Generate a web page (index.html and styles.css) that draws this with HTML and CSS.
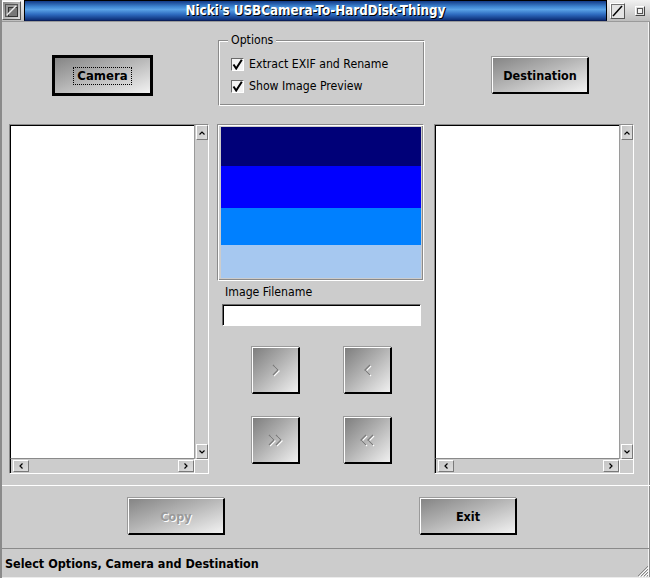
FILE: index.html
```html
<!DOCTYPE html>
<html>
<head>
<meta charset="utf-8">
<link rel="stylesheet" href="styles.css">
</head>
<body>
<div class="window">
  <div class="titlebar">
    <div class="gadget-left">
      <div class="gl-box">
        <svg width="15" height="15" viewBox="0 0 15 15"><rect x="1.5" y="1.5" width="12" height="12" fill="#9a9a9a" stroke="#555"/><rect x="4.5" y="4.5" width="9" height="9" fill="#777" stroke="#333"/><path d="M3 12 L12 3" stroke="#eee" stroke-width="1.5"/></svg>
      </div>
    </div>
    <div class="title"><span>Nicki's USBCamera-To-HardDisk-Thingy</span></div>
    <div class="gadgets-right">
      <div class="g-zoom"><svg width="13" height="14" viewBox="0 0 13 14"><path d="M2 12 L11 2" stroke="#000" stroke-width="1.5"/></svg></div>
      <div class="g-depth"><div class="g-depth-in"></div></div>
    </div>
  </div>

  <div class="main">
    <div class="top-left">
      <div class="btn btn-default camera"><span class="focus">Camera</span></div>
    </div>
    <div class="options">
      <span class="legend">Options</span>
      <div class="check"><span class="box"><svg width="11" height="11" viewBox="0 0 11 11"><path d="M1.5 5.5 L4.2 9.5 L9.8 0.8" fill="none" stroke="#000" stroke-width="2"/></svg></span>Extract EXIF and Rename</div>
      <div class="check"><span class="box"><svg width="11" height="11" viewBox="0 0 11 11"><path d="M1.5 5.5 L4.2 9.5 L9.8 0.8" fill="none" stroke="#000" stroke-width="2"/></svg></span>Show Image Preview</div>
    </div>
    <div class="top-right">
      <div class="btn dest">Destination</div>
    </div>

    <div class="list">
      <div class="list-body"></div>
      <div class="vscroll">
        <div class="sbtn v"><svg width="6" height="4" viewBox="0 0 6 4"><path d="M0.5 3.5 L3 1 L5.5 3.5" fill="none" stroke="#000" stroke-width="1.2"/></svg></div>
        <div class="track"></div>
        <div class="sbtn v"><svg width="6" height="4" viewBox="0 0 6 4"><path d="M0.5 0.5 L3 3 L5.5 0.5" fill="none" stroke="#000" stroke-width="1.2"/></svg></div>
      </div>
      <div class="hscroll">
        <div class="sbtn h"><svg width="4" height="6" viewBox="0 0 4 6"><path d="M3.5 0.5 L1 3 L3.5 5.5" fill="none" stroke="#000" stroke-width="1.2"/></svg></div>
        <div class="track"></div>
        <div class="sbtn h"><svg width="4" height="6" viewBox="0 0 4 6"><path d="M0.5 0.5 L3 3 L0.5 5.5" fill="none" stroke="#000" stroke-width="1.2"/></svg></div>
      </div>
      <div class="corner"></div>
    </div>

    <div class="middle">
      <div class="preview">
        <div class="stripe s1"></div>
        <div class="stripe s2"></div>
        <div class="stripe s3"></div>
        <div class="stripe s4"></div>
      </div>
      <div class="fname-label">Image Filename</div>
      <div class="fname-field"></div>
      <div class="arrows">
        <div class="abtn"><svg width="10" height="13" viewBox="0 0 10 13"><path d="M3 2 L8 7 L3 12" fill="none" stroke="#fff" stroke-width="1.3"/><path d="M2 1 L7 6 L2 11" fill="none" stroke="#7c7c7c" stroke-width="1.3"/></svg></div>
        <div class="abtn"><svg width="10" height="13" viewBox="0 0 10 13"><path d="M8 2 L3 7 L8 12" fill="none" stroke="#fff" stroke-width="1.3"/><path d="M7 1 L2 6 L7 11" fill="none" stroke="#7c7c7c" stroke-width="1.3"/></svg></div>
        <div class="abtn"><svg width="17" height="13" viewBox="0 0 17 13"><path d="M3 2 L8 7 L3 12 M10 2 L15 7 L10 12" fill="none" stroke="#fff" stroke-width="1.3"/><path d="M2 1 L7 6 L2 11 M9 1 L14 6 L9 11" fill="none" stroke="#7c7c7c" stroke-width="1.3"/></svg></div>
        <div class="abtn"><svg width="17" height="13" viewBox="0 0 17 13"><path d="M8 2 L3 7 L8 12 M15 2 L10 7 L15 12" fill="none" stroke="#fff" stroke-width="1.3"/><path d="M7 1 L2 6 L7 11 M14 1 L9 6 L14 11" fill="none" stroke="#7c7c7c" stroke-width="1.3"/></svg></div>
      </div>
    </div>

    <div class="list right">
      <div class="list-body"></div>
      <div class="vscroll">
        <div class="sbtn v"><svg width="6" height="4" viewBox="0 0 6 4"><path d="M0.5 3.5 L3 1 L5.5 3.5" fill="none" stroke="#000" stroke-width="1.2"/></svg></div>
        <div class="track"></div>
        <div class="sbtn v"><svg width="6" height="4" viewBox="0 0 6 4"><path d="M0.5 0.5 L3 3 L5.5 0.5" fill="none" stroke="#000" stroke-width="1.2"/></svg></div>
      </div>
      <div class="hscroll">
        <div class="sbtn h"><svg width="4" height="6" viewBox="0 0 4 6"><path d="M3.5 0.5 L1 3 L3.5 5.5" fill="none" stroke="#000" stroke-width="1.2"/></svg></div>
        <div class="track"></div>
        <div class="sbtn h"><svg width="4" height="6" viewBox="0 0 4 6"><path d="M0.5 0.5 L3 3 L0.5 5.5" fill="none" stroke="#000" stroke-width="1.2"/></svg></div>
      </div>
      <div class="corner"></div>
    </div>
  </div>

  <div class="actions">
    <div class="btn copy disabled">Copy</div>
    <div class="btn exit">Exit</div>
  </div>

  <div class="status">
    <span class="status-text">Select Options, Camera and Destination</span>
    <svg class="grip" width="12" height="12" viewBox="0 0 12 12"><path d="M11 1 L1 11 M11 4 L4 11 M11 7 L7 11 M11 10 L10 11" stroke="#888" stroke-width="1"/><path d="M12 2 L2 12 M12 5 L5 12 M12 8 L8 12" stroke="#fff" stroke-width="1"/></svg>
  </div>
</div>
</body>
</html>
```

FILE: styles.css
```css
* { box-sizing: border-box; margin: 0; padding: 0; }

body {
  width: 650px;
  height: 578px;
  overflow: hidden;
  background: #cccccc;
  font-family: "DejaVu Sans Condensed", "DejaVu Sans", sans-serif;
  color: #000;
}

.window {
  width: 650px;
  height: 578px;
  display: flex;
  flex-direction: column;
  border-left: 2px solid #8a8a8a;
  box-shadow: inset -1px 0 0 #8a8a8a, inset -2px 0 0 #f4f4f4;
}

/* ---------- title bar ---------- */
.titlebar {
  height: 22px;
  display: flex;
  background: linear-gradient(#f2f2f2, #bdbdbd);
  border-bottom: 1px solid #9a9a9a;
}
.gadget-left {
  width: 22px;
  padding: 1px 0 0 0;
}
.gl-box {
  width: 19px;
  height: 19px;
  border: 1px solid;
  border-color: #fff #555 #555 #fff;
  background: linear-gradient(135deg, #888, #ddd);
  display: flex;
  align-items: center;
  justify-content: center;
}
.title {
  flex: 1;
  border: 1px solid #000;
  border-bottom-color: #0b1f5a;
  background: linear-gradient(#123a86 0%, #3f86d2 30%, #5aa2e6 45%, #2f6cc0 70%, #0d2f78 100%);
  display: flex;
  align-items: center;
  justify-content: center;
}
.title span {
  color: #fff;
  font-weight: bold;
  font-size: 13.3px;
  text-shadow: 1px 1px 0 #000;
}
.gadgets-right {
  width: 43px;
  display: flex;
  align-items: flex-start;
}
.g-zoom {
  width: 15px;
  height: 16px;
  margin: 3px 0 0 3px;
  border: 1px solid;
  border-color: #fff #555 #555 #fff;
  box-shadow: inset 1px 1px 0 #777;
  background: #e4e4e4;
  display: flex;
  align-items: center;
  justify-content: center;
}
.g-depth {
  width: 10px;
  height: 10px;
  margin: 6px 0 0 10px;
  border: 1px solid;
  border-color: #fff #444 #444 #fff;
  background: #ddd;
  display: flex;
  align-items: center;
  justify-content: center;
}
.g-depth-in {
  width: 6px;
  height: 6px;
  border: 1px solid #555;
  background: #f0f0f0;
}

/* ---------- main grid ---------- */
.main {
  height: 463px;
  padding: 18px 0 0 7px;
  display: grid;
  grid-template-columns: 200px 208px 201px;
  grid-template-rows: 84px 350px;
  column-gap: 8px;
}

.btn {
  display: flex;
  align-items: center;
  justify-content: center;
  font-weight: bold;
  font-size: 12.5px;
  background: linear-gradient(to bottom right, #858585 0%, #b4b4b4 45%, #f2f2f2 100%);
  border: 1px solid;
  border-color: #fff #000 #000 #fff;
  border-width: 1px 2px 2px 1px;
  box-shadow: -1px -1px 0 #9a9a9a;
}
.btn-default {
  border: 2px solid #000;
  box-shadow: 0 0 0 1px #000;
}
.camera {
  width: 99px;
  height: 39px;
  margin: 16px 0 0 44px;
}
.camera .focus {
  border: 1px dotted #000;
  padding: 0 3px;
  line-height: 16px;
  font-size: 13px;
}
.top-right { margin-left: 1px; }
.dest {
  width: 97px;
  height: 37px;
  margin: 17px 0 0 58px;
}

/* options group */
.options {
  position: relative;
  margin-left: 1px;
  width: 207px;
  height: 66px;
  border: 1px solid;
  border-color: #8a8a8a #fff #fff #8a8a8a;
  box-shadow: inset 1px 1px 0 #fff, inset -1px -1px 0 #8a8a8a;
  padding: 17px 0 0 12px;
  font-size: 12.2px;
}
.legend {
  position: absolute;
  left: 9px;
  top: -9px;
  padding: 0 3px;
  background: #cccccc;
  line-height: 16px;
}
.check {
  display: flex;
  align-items: center;
  height: 13px;
  margin-bottom: 9px;
  line-height: 13px;
}
.box {
  width: 13px;
  height: 13px;
  margin-right: 5px;
  border: 1px solid;
  border-color: #6a6a6a #fff #fff #6a6a6a;
  background: #f4f4f4;
  display: flex;
  align-items: center;
  justify-content: center;
}

/* list boxes */
.list {
  width: 200px;
  height: 350px;
  border: 1px solid;
  border-color: #8a8a8a #fff #fff #8a8a8a;
  display: grid;
  grid-template-columns: 184px 14px;
  grid-template-rows: 334px 14px;
}
.list.right { margin-left: 1px; }
.list-body {
  background: #fff;
  border-top: 1px solid #000;
  border-left: 1px solid #000;
  border-bottom: 1px solid #8a8a8a;
}
.vscroll {
  display: flex;
  flex-direction: column;
  padding: 0 1px;
  border-left: 1px solid #9a9a9a;
}
.vscroll .track { flex: 1; }
.hscroll {
  display: flex;
  padding: 1px 0 0 2px;
  border-left: 1px solid #000;
}
.hscroll .track { flex: 1; }
.corner {
  border-left: 1px solid #fff;
  border-top: 1px solid #fff;
}
.sbtn {
  display: flex;
  align-items: center;
  justify-content: center;
  border: 1px solid;
  border-color: #fff #7a7a7a #7a7a7a #fff;
  background: linear-gradient(to bottom right, #c4c4c4, #dedede);
}
.sbtn.v { width: 12px; height: 15px; }
.sbtn.h { width: 16px; height: 12px; }

/* middle column */
.middle {
  display: flex;
  flex-direction: column;
}
.preview {
  width: 207px;
  height: 157px;
  border: 1px solid;
  border-color: #8a8a8a #fff #fff #8a8a8a;
  box-shadow: inset 1px 1px 0 #fff, inset -1px -1px 0 #8a8a8a;
  padding: 2px 2px 2px 3px;
  display: flex;
  flex-direction: column;
}
.stripe { width: 200px; }
.s1 { height: 39px; background: #000078; }
.s2 { height: 42px; background: #0000ff; }
.s3 { height: 37px; background: #0080ff; }
.s4 { height: 33px; background: #a6c8f0; }

.fname-label {
  height: 23px;
  line-height: 23px;
  padding-left: 8px;
  font-size: 12.2px;
}
.fname-field {
  margin-left: 5px;
  width: 199px;
  height: 22px;
  background: #fff;
  border: 1px solid;
  border-color: #6a6a6a #fff #fff #6a6a6a;
  box-shadow: inset 1px 1px 0 #000;
}
.arrows {
  margin: 21px 0 0 35px;
  display: grid;
  grid-template-columns: 48px 48px;
  column-gap: 44px;
  row-gap: 23px;
}
.abtn {
  width: 48px;
  height: 47px;
  display: flex;
  align-items: center;
  justify-content: center;
  background: linear-gradient(to bottom right, #7e7e7e 0%, #b0b0b0 45%, #f0f0f0 100%);
  border: 1px solid;
  border-color: #fff #000 #000 #fff;
  border-width: 1px 2px 2px 1px;
  box-shadow: -1px -1px 0 #9a9a9a;
}

/* bottom buttons */
.actions {
  height: 63px;
  border-top: 1px solid #fff;
  display: flex;
  align-items: flex-start;
  padding: 12px 0 0 126px;
}
.copy, .exit {
  width: 97px;
  height: 37px;
}
.exit { margin-left: 195px; }
.disabled {
  color: #9a9a9a;
  text-shadow: 1px 1px 0 #fff;
}

/* status bar */
.status {
  flex: 1;
  border-top: 1px solid #8a8a8a;
  border-bottom: 1px solid #ececec;
  display: flex;
  align-items: center;
  padding-left: 3px;
  font-size: 12.5px;
  font-weight: bold;
}
.grip {
  margin-left: auto;
  align-self: flex-end;
  margin-right: 1px;
}
```
